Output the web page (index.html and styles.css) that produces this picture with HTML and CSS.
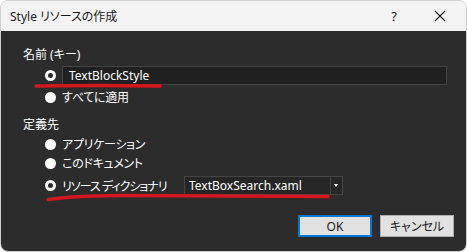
FILE: index.html
```html
<!DOCTYPE html>
<html lang="ja">
<head>
    <meta charset="UTF-8">
    <title>Style リソースの作成</title>
    <link rel="stylesheet" href="styles.css">
</head>
<body>
    <div class="window">
        <div class="titlebar">
            <span class="title">Style リソースの作成</span>
            <span class="help">?</span>
            <span class="close">
                <svg width="12" height="12" viewBox="0 0 12 12"><path d="M1 1 L11 11 M11 1 L1 11" stroke="#1a1a1a" stroke-width="1.1"/></svg>
            </span>
        </div>
        <div class="content">
            <div class="label">名前 (キー)</div>
            <div class="row key-row">
                <span class="radio checked"></span>
                <div class="textbox">TextBlockStyle</div>
            </div>
            <div class="row option">
                <span class="radio"></span>
                <span>すべてに適用</span>
            </div>

            <div class="label section">定義先</div>
            <div class="row option">
                <span class="radio"></span>
                <span>アプリケーション</span>
            </div>
            <div class="row option">
                <span class="radio"></span>
                <span>このドキュメント</span>
            </div>
            <div class="row dict-row">
                <span class="radio checked"></span>
                <span class="dict-label">リソース ディクショナリ</span>
                <div class="combo">
                    <span class="combo-text">TextBoxSearch.xaml</span>
                    <span class="combo-arrow"></span>
                </div>
            </div>

            <div class="buttons">
                <button class="btn default">OK</button>
                <button class="btn">キャンセル</button>
            </div>

            <!-- red marker strokes drawn over the dialog -->
            <svg class="marks" width="467" height="252" viewBox="0 0 467 252">
                <path d="M36 86 Q60 85.5 100 85.5 L160 86" stroke="#d4171c" stroke-width="3.5" fill="none" stroke-linecap="round"/>
                <path d="M48 199.5 Q70 196 120 195.5 L328 196.5" stroke="#d4171c" stroke-width="3.5" fill="none" stroke-linecap="round"/>
            </svg>
        </div>
    </div>
</body>
</html>
```

FILE: styles.css
```css
body {
    margin: 0;
    background: #ffffff;
    font-family: 'Noto Sans', 'Noto Sans CJK JP', sans-serif;
    font-size: 12px;
    font-feature-settings: "palt";
}

.window {
    width: 467px;
    height: 252px;
    border-radius: 8px;
    overflow: hidden;
    display: flex;
    flex-direction: column;
    box-sizing: border-box;
    border: 1px solid #cfcfcf;
}

.titlebar {
    height: 30px;
    background: #f3f3f3;
    display: flex;
    align-items: center;
    padding-left: 9px;
    color: #1a1a1a;
}

.title {
    flex: 1;
}

.help {
    width: 46px;
    text-align: center;
    font-size: 13px;
}

.close {
    width: 46px;
    display: flex;
    justify-content: center;
    margin-right: 3px;
}

.content {
    position: relative;
    flex: 1;
    background: #2c2c2c;
    color: #ffffff;
    padding: 16px 0 0 22px;
}

.label {
    height: 16px;
    line-height: 16px;
}

.label.section {
    margin-top: 12px;
}

.row {
    display: flex;
    align-items: center;
    white-space: nowrap;
}

.radio {
    width: 11px;
    height: 11px;
    border-radius: 50%;
    background: #ffffff;
    box-sizing: border-box;
    margin: 0 6px 0 22px;
    flex-shrink: 0;
}

.radio.checked {
    background: #2c2c2c;
    border: 3px solid #ffffff;
}

.key-row {
    margin-top: 3px;
    height: 19px;
}

.textbox {
    width: 385px;
    height: 19px;
    box-sizing: border-box;
    background: #202020;
    border: 1px solid #444444;
    line-height: 17px;
    padding-left: 6px;
    color: #ffffff;
}

.option {
    height: 16px;
    margin-top: 3px;
    letter-spacing: -0.3px;
}

.key-row + .option {
    margin-top: 4px;
}

.dict-row {
    height: 19px;
    margin-top: 5px;
}

.dict-label {
    width: 122px;
    flex-shrink: 0;
    letter-spacing: -1px;
}

.combo {
    width: 159px;
    height: 19px;
    box-sizing: border-box;
    border: 1px solid #454545;
    background: #262626;
    display: flex;
    flex-shrink: 0;
}

.combo-text {
    flex: 1;
    line-height: 17px;
    padding-left: 4px;
}

.combo-arrow {
    width: 11px;
    border-left: 1px solid #454545;
    position: relative;
}

.combo-arrow::after {
    content: '';
    position: absolute;
    left: 3px;
    top: 7px;
    border-left: 2.5px solid transparent;
    border-right: 2.5px solid transparent;
    border-top: 3px solid #ffffff;
}

.buttons {
    display: flex;
    justify-content: flex-end;
    gap: 8px;
    margin-top: 20px;
    padding-right: 12px;
}

.btn {
    width: 74px;
    height: 22px;
    background: #e1e1e1;
    border: 1px solid #adadad;
    color: #1a1a1a;
    font-family: 'Noto Sans', 'Noto Sans CJK JP', sans-serif;
    font-size: 12px;
    font-feature-settings: "palt";
    padding: 0;
}

.btn.default {
    border: 2px solid #0078d4;
}

.marks {
    position: absolute;
    left: -1px;
    top: -31px;
    pointer-events: none;
}
```
